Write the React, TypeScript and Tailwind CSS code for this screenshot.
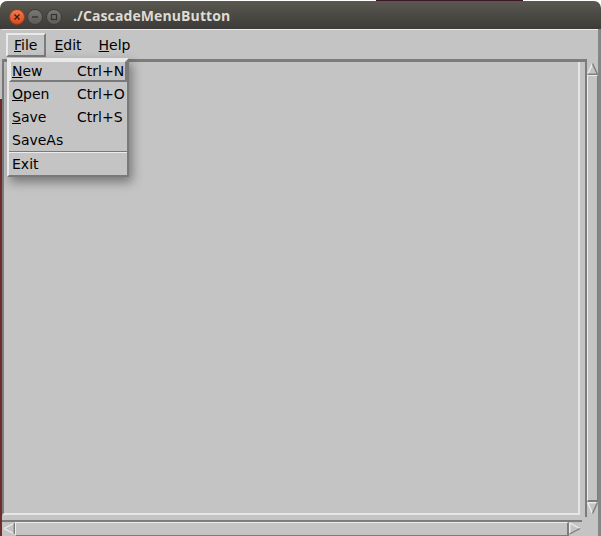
import React from "react";

// Tk "CascadeMenuButton" demo window: title bar, menubar with the File menu dropped down,
// an empty text widget and two scrollbars.

function CloseBtn() {
  return (
    <div className="mt-[8px] w-[16px] h-[16px] rounded-full border border-[#9c3b17] bg-gradient-to-b from-[#f37a4c] to-[#d9491a] flex items-center justify-center">
      <svg width="8" height="8" viewBox="0 0 8 8">
        <path d="M1.5 1.5 L6.5 6.5 M6.5 1.5 L1.5 6.5" stroke="#3a1d12" strokeWidth="1.3" />
      </svg>
    </div>
  );
}

function MinBtn() {
  return (
    <div className="mt-[8px] ml-[2px] w-[16px] h-[16px] rounded-full border border-[#3e3d39] bg-gradient-to-b from-[#7a7872] to-[#5c5b56] flex items-center justify-center">
      <svg width="8" height="8" viewBox="0 0 8 8">
        <path d="M1 4 L7 4" stroke="#34332f" strokeWidth="1.4" />
      </svg>
    </div>
  );
}

function MaxBtn() {
  return (
    <div className="mt-[8px] ml-[3px] w-[16px] h-[16px] rounded-full border border-[#3e3d39] bg-gradient-to-b from-[#7a7872] to-[#5c5b56] flex items-center justify-center">
      <svg width="8" height="8" viewBox="0 0 8 8">
        <rect x="1.5" y="1.5" width="5" height="5" fill="none" stroke="#34332f" strokeWidth="1.2" />
      </svg>
    </div>
  );
}

function UpArrow() {
  return (
    <svg width="11" height="13" viewBox="0 0 11 13">
      <polygon points="5.5,1.5 0.5,12.5 10.5,12.5" fill="#c4c4c4" />
      <line x1="5.5" y1="1.5" x2="0.5" y2="12.5" stroke="#ededed" strokeWidth="1.4" />
      <line x1="5.5" y1="1.5" x2="10.5" y2="12.5" stroke="#7c7c7c" strokeWidth="1.4" />
      <line x1="0.5" y1="12.3" x2="10.5" y2="12.3" stroke="#7c7c7c" strokeWidth="1.4" />
    </svg>
  );
}

function DownArrow() {
  return (
    <svg width="11" height="13" viewBox="0 0 11 13">
      <polygon points="0.5,0.5 10.5,0.5 5.5,11.5" fill="#c4c4c4" />
      <line x1="0.5" y1="0.7" x2="10.5" y2="0.7" stroke="#ededed" strokeWidth="1.4" />
      <line x1="0.5" y1="0.5" x2="5.5" y2="11.5" stroke="#ededed" strokeWidth="1.4" />
      <line x1="10.5" y1="0.5" x2="5.5" y2="11.5" stroke="#7c7c7c" strokeWidth="1.4" />
    </svg>
  );
}

function LeftArrow() {
  return (
    <svg width="12" height="13" viewBox="0 0 12 13">
      <polygon points="1,6.5 11.5,1 11.5,12" fill="#c4c4c4" />
      <line x1="1" y1="6.5" x2="11.5" y2="1" stroke="#ededed" strokeWidth="1.4" />
      <line x1="1" y1="6.5" x2="11.5" y2="12" stroke="#ededed" strokeWidth="1.4" />
      <line x1="11.3" y1="1" x2="11.3" y2="12" stroke="#7c7c7c" strokeWidth="1.4" />
    </svg>
  );
}

function RightArrow() {
  return (
    <svg width="12" height="13" viewBox="0 0 12 13">
      <polygon points="0.5,1 11,6.5 0.5,12" fill="#c4c4c4" />
      <line x1="0.7" y1="1" x2="0.7" y2="12" stroke="#ededed" strokeWidth="1.4" />
      <line x1="0.5" y1="1" x2="11" y2="6.5" stroke="#ededed" strokeWidth="1.4" />
      <line x1="0.5" y1="12" x2="11" y2="6.5" stroke="#7c7c7c" strokeWidth="1.4" />
    </svg>
  );
}

function MenuButton({ first, rest, active }: { first: string; rest: string; active?: boolean }) {
  return (
    <div
      className={
        "h-[24px] pl-[6px] pr-[7px] pt-[1px] border-2 leading-[18px] " +
        (active
          ? "border-t-[#e9e9e9] border-l-[#e9e9e9] border-b-[#7c7c7c] border-r-[#7c7c7c]"
          : "border-transparent")
      }
    >
      <span className="underline decoration-1 underline-offset-[1px]">{first}</span>
      {rest}
    </div>
  );
}

function FileMenu() {
  return (
    <div className="absolute left-[7px] top-[58px] w-[122px] h-[119px] bg-[#c4c4c4] border-2 border-t-[#e9e9e9] border-l-[#e9e9e9] border-b-[#7a7a7a] border-r-[#7a7a7a] shadow-[3px_5px_10px_rgba(0,0,0,0.4)] flex flex-col">
      {/* active entry */}
      <div className="h-[22px] pl-[1px] border-2 border-t-[#e9e9e9] border-l-[#e9e9e9] border-b-[#7a7a7a] border-r-[#7a7a7a] leading-[18px] flex">
        <span className="w-[65px]">
          <span className="underline decoration-1 underline-offset-[1px]">N</span>ew
        </span>
        <span>Ctrl+N</span>
      </div>
      <div className="h-[23px] pl-[3px] pt-[2px] leading-[21px] flex">
        <span className="w-[65px]">
          <span className="underline decoration-1 underline-offset-[1px]">O</span>pen
        </span>
        <span>Ctrl+O</span>
      </div>
      <div className="h-[23px] pl-[3px] pt-[2px] leading-[21px] flex">
        <span className="w-[65px]">
          <span className="underline decoration-1 underline-offset-[1px]">S</span>ave
        </span>
        <span>Ctrl+S</span>
      </div>
      <div className="h-[23px] pl-[3px] pt-[2px] leading-[21px]">SaveAs</div>
      <div className="h-[3px]">
        <div className="h-[1px] bg-[#7a7a7a]" />
        <div className="h-[1px] bg-[#ececec]" />
      </div>
      <div className="h-[21px] pl-[3px] leading-[21px]">Exit</div>
    </div>
  );
}

export default function App() {
  return (
    <div className="relative w-[601px] h-[536px] bg-white flex flex-col overflow-hidden font-['DejaVu_Sans',sans-serif] text-[14px] text-black">
      {/* desktop showing above the window */}
      <div className="h-[1px] flex">
        <div className="ml-[376px] w-[147px] bg-[#3b1826]" />
      </div>

      {/* title bar */}
      <div className="h-[28px] rounded-t-[7px] bg-gradient-to-b from-[#5a5851] to-[#3c3b37] flex items-start pl-[9px]">
        <CloseBtn />
        <MinBtn />
        <MaxBtn />
        <span className="ml-[11px] mt-[7px] leading-[16px] font-['Open_Sans',sans-serif] font-bold text-[14px] tracking-[0.1px] text-[#dfdbd2]">
          ./CascadeMenuButton
        </span>
      </div>

      {/* window body */}
      <div className="flex-1 flex">
        <div className="w-[2px] flex flex-col">
          <div className="h-[70px] bg-[#c4c4c4]" />
          <div className="flex-1 bg-[#6e2c2c]" />
        </div>

        <div className="w-[596px] flex flex-col bg-[#c4c4c4]">
          <div className="h-[1px] bg-[#e9e9e9]" />

          {/* menubar */}
          <div className="h-[29px] flex items-start pt-[3px] pl-[4px]">
            <MenuButton first="F" rest="ile" active />
            <MenuButton first="E" rest="dit" />
            <MenuButton first="H" rest="elp" />
          </div>

          {/* text + vertical scrollbar */}
          <div className="h-[461px] flex">
            <div className="w-[583px] flex flex-col border-t-[3px] border-[#7c7c7c]">
              <div className="h-[453px] w-[578px] border-l-2 border-l-[#7c7c7c] border-r-2 border-r-[#e6e6e6] border-b-2 border-b-[#e6e6e6]" />
            </div>
            <div className="w-[13px] h-[458px] border-l-2 border-[#7c7c7c] flex flex-col pt-[3px] pb-[2px]">
              <UpArrow />
              <div className="flex-1 border-l border-t border-[#ededed] border-r border-r-[#7c7c7c] border-b-2 border-b-[#7c7c7c]" />
              <DownArrow />
            </div>
          </div>

          {/* horizontal scrollbar */}
          <div className="h-[16px] flex">
            <div className="w-[580px] border-t-2 border-[#7c7c7c] flex pl-[1px] pr-[1px]">
              <LeftArrow />
              <div className="flex-1 border-t border-l border-[#ededed] border-r-2 border-r-[#7c7c7c] border-b border-b-[#7c7c7c]" />
              <RightArrow />
            </div>
            <div className="flex-1" />
          </div>
        </div>

        <div className="w-[3px] bg-[#858585]" />
      </div>

      <FileMenu />
    </div>
  );
}
